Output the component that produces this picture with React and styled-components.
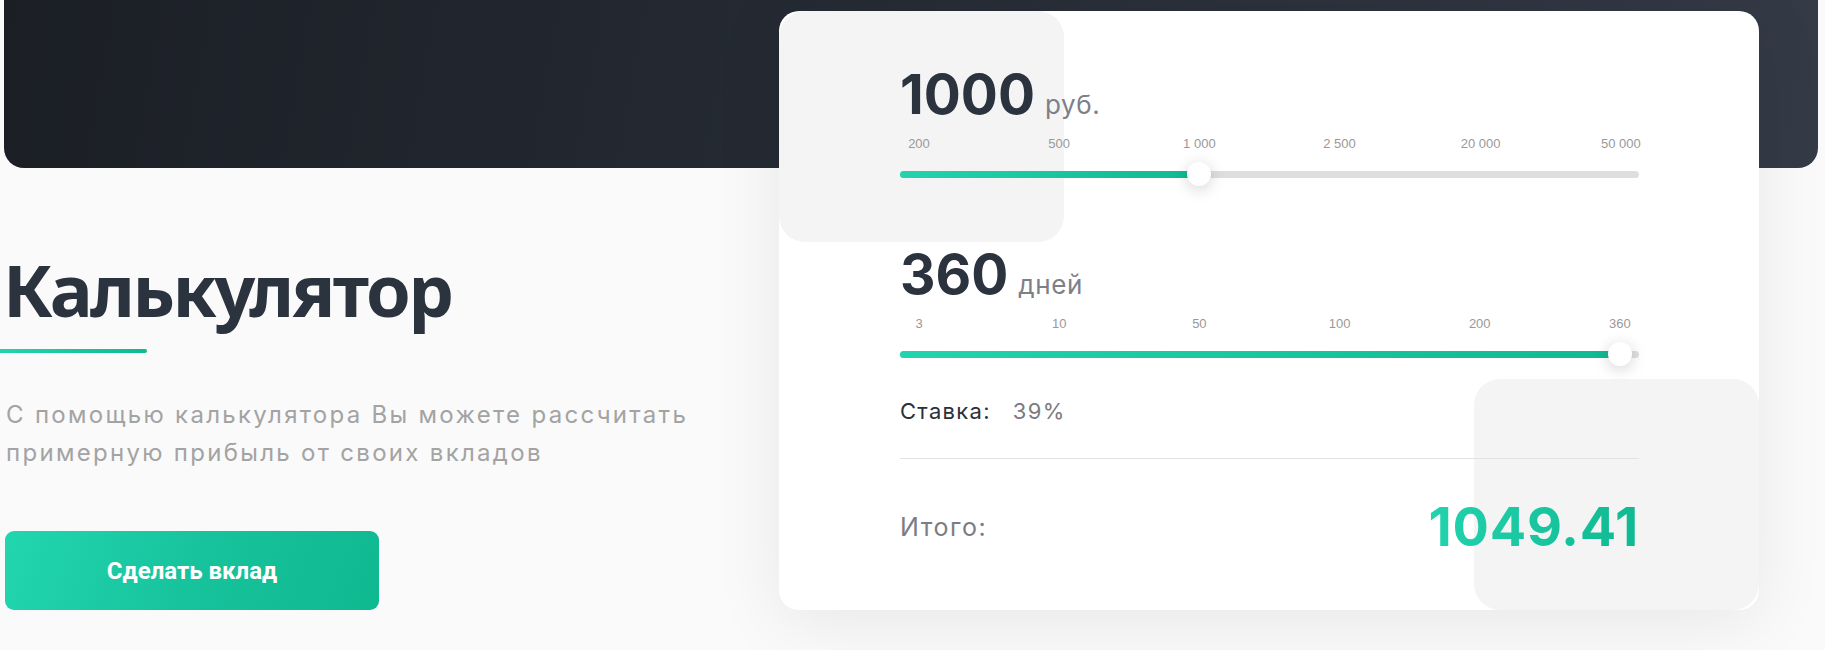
import React from "react";
import styled, { createGlobalStyle } from "styled-components";

const GlobalStyle = createGlobalStyle`
  html, body {
    margin: 0;
    padding: 0;
    background: #fafafa;
    font-family: Inter, "Noto Sans", sans-serif;
    overflow: hidden;
  }
`;

const AMOUNT_STEPS = ["200", "500", "1 000", "2 500", "20 000", "50 000"];
const DAY_STEPS = ["3", "10", "50", "100", "200", "360"];

const Slider = ({ value, unit, steps, active }) => {
  const frac = active / (steps.length - 1);
  const pos = `calc(19px + (100% - 38px) * ${frac})`;
  return (
    <SliderBlock>
      <ValueRow>
        <Value>{value}</Value>
        <Unit>{unit}</Unit>
      </ValueRow>
      <Steps>
        {steps.map((s) => (
          <Step key={s}>{s}</Step>
        ))}
      </Steps>
      <Track>
        <Fill style={{ width: pos }} />
        <Thumb style={{ left: pos }} />
      </Track>
    </SliderBlock>
  );
};

const App = () => {
  return (
    <Page>
      <GlobalStyle />
      <Banner />
      <Content>
        <Intro>
          <Title>Калькулятор</Title>
          <Underline />
          <Description>
            С помощью калькулятора Вы можете рассчитать
            <br />
            примерную прибыль от своих вкладов
          </Description>
          <Button>Сделать вклад</Button>
        </Intro>
        <Card>
          <Slider value="1000" unit="руб." steps={AMOUNT_STEPS} active={2} />
          <Slider value="360" unit="дней" steps={DAY_STEPS} active={5} />
          <RateRow>
            <RateLabel>Ставка:</RateLabel>
            <RateValue>39%</RateValue>
          </RateRow>
          <Divider />
          <TotalRow>
            <TotalLabel>Итого:</TotalLabel>
            <TotalValue>1049.41</TotalValue>
          </TotalRow>
        </Card>
      </Content>
    </Page>
  );
};

const Page = styled.div`
  width: 1825px;
  height: 650px;
  background: #fafafa;
`;

const Banner = styled.div`
  height: 168px;
  margin: 0 7px 0 4px;
  border-radius: 0 0 20px 20px;
  background: linear-gradient(100deg, #1b1e25 0%, #262c35 50%, #343b47 100%);
`;

const Content = styled.div`
  position: relative;
  display: flex;
  margin-top: -157px;
  padding-left: 5px;
`;

const Intro = styled.div`
  width: 774px;
  padding-top: 241px;
  display: flex;
  flex-direction: column;
  align-items: flex-start;
`;

const Title = styled.h1`
  margin: 0 0 0 -2px;
  font-family: "Noto Sans", "Open Sans", sans-serif;
  font-weight: 700;
  font-size: 72px;
  line-height: 74px;
  letter-spacing: -2.5px;
  color: #2b333e;
`;

const Underline = styled.div`
  width: 147px;
  height: 4px;
  margin: 23px 0 0 -5px;
  border-radius: 0 2px 2px 0;
  background: linear-gradient(90deg, #22d3ae, #10b991);
`;

const Description = styled.p`
  margin: 43px 0 0 1px;
  font-size: 24px;
  line-height: 38px;
  letter-spacing: 2.3px;
  color: #a3a3a3;
`;

const Button = styled.button`
  margin-top: 59px;
  width: 374px;
  height: 79px;
  border: none;
  border-radius: 9px;
  background: linear-gradient(110deg, #22d6b0 0%, #17c39c 50%, #0fb990 100%);
  color: #fff;
  font-family: Roboto, sans-serif;
  font-weight: 700;
  font-size: 24px;
  cursor: pointer;
`;

const Card = styled.div`
  position: relative;
  width: 980px;
  height: 599px;
  box-sizing: border-box;
  padding: 56px 120px 0 121px;
  background: #fff;
  border-radius: 20px;
  overflow: hidden;
  box-shadow: 0 12px 70px rgba(0, 0, 0, 0.08);

  &::before,
  &::after {
    content: "";
    position: absolute;
    width: 285px;
    height: 231px;
    border-radius: 26px;
    background: #f4f4f4;
  }
  &::before {
    top: 0;
    left: 0;
  }
  &::after {
    right: 0;
    bottom: 0;
  }

  & > * {
    position: relative;
    z-index: 1;
  }
`;

const SliderBlock = styled.div`
  & + & {
    margin-top: 61px;
  }
`;

const ValueRow = styled.div`
  display: flex;
  align-items: baseline;
  height: 55px;
`;

const Value = styled.span`
  font-weight: 700;
  font-size: 55px;
  line-height: 1;
  color: #2b333e;
`;

const Unit = styled.span`
  margin-left: 10px;
  font-size: 26px;
  letter-spacing: 0.6px;
  color: #7d8089;
`;

const Steps = styled.div`
  display: flex;
  justify-content: space-between;
  margin-top: 14px;
  height: 16px;
`;

const Step = styled.span`
  width: 38px;
  text-align: center;
  white-space: nowrap;
  font-family: "Liberation Sans", Arial, sans-serif;
  font-size: 13px;
  line-height: 16px;
  color: #999;
`;

const Track = styled.div`
  position: relative;
  margin-top: 10px;
  height: 24px;

  &::before {
    content: "";
    position: absolute;
    left: 0;
    right: 0;
    top: 9px;
    height: 7px;
    border-radius: 4px;
    background: #dedede;
  }
`;

const Fill = styled.div`
  position: absolute;
  left: 0;
  top: 9px;
  height: 7px;
  border-radius: 4px;
  background: linear-gradient(90deg, #22d3ae, #10b991);
`;

const Thumb = styled.div`
  position: absolute;
  top: 0;
  width: 24px;
  height: 24px;
  margin-left: -12px;
  border-radius: 50%;
  background: #fff;
  box-shadow: 0 3px 16px rgba(0, 0, 0, 0.18);
`;

const RateRow = styled.div`
  display: flex;
  align-items: center;
  gap: 22px;
  margin-top: 33px;
  font-size: 22px;
  line-height: 24px;
  letter-spacing: 1.3px;
`;

const RateLabel = styled.span`
  color: #2b2f36;
`;

const RateValue = styled.span`
  color: #7a7a80;
`;

const Divider = styled.div`
  height: 1px;
  margin-top: 35px;
  background: #e2e2e2;
`;

const TotalRow = styled.div`
  display: flex;
  align-items: center;
  justify-content: space-between;
  margin-top: 41px;
`;

const TotalLabel = styled.span`
  font-size: 25px;
  letter-spacing: 1.5px;
  color: #7a7d85;
`;

const TotalValue = styled.span`
  font-weight: 700;
  font-size: 54px;
  line-height: 1;
  letter-spacing: 0.7px;
  background: linear-gradient(90deg, #22d3ae, #10b991);
  -webkit-background-clip: text;
  background-clip: text;
  color: transparent;
`;

export default App;
